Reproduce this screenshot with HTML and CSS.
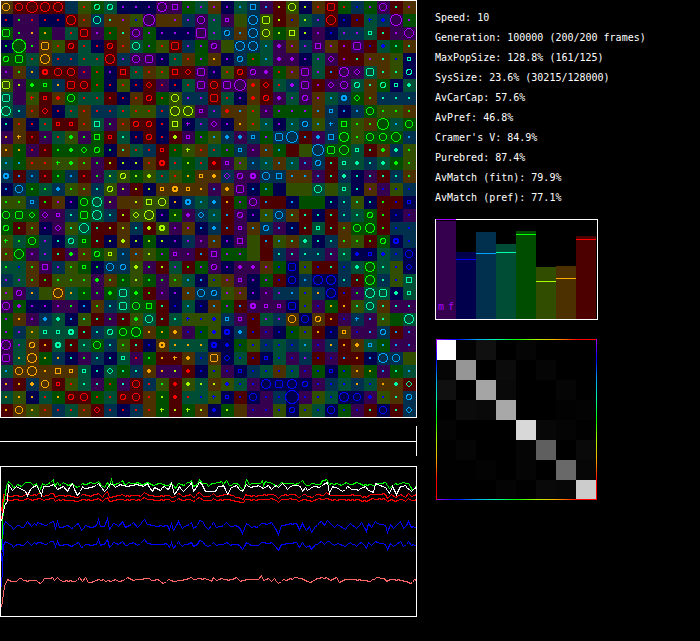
FILE: index.html
```html
<!DOCTYPE html>
<html lang="en">
<head>
<meta charset="utf-8">
<title>Population simulation</title>
<link rel="stylesheet" href="styles.css">
</head>
<body>
<main class="app">
  <section class="world">
    <svg id="field" class="field" viewBox="0 0 417 418" role="img"></svg>
    <svg class="timeline" viewBox="0 0 417 30" role="img"><path d="M0 15.5H416.5M416.5 0V30"/></svg>
    <svg id="history" class="history" viewBox="0 0 417 151" role="img"></svg>
  </section>
  <aside class="panel">
    <ul class="stats">
      <li>Speed: 10</li>
      <li>Generation: 100000 (200/200 frames)</li>
      <li>MaxPopSize: 128.8% (161/125)</li>
      <li>SysSize: 23.6% (30215/128000)</li>
      <li>AvCarCap: 57.6%</li>
      <li>AvPref: 46.8%</li>
      <li>Cramer's V: 84.9%</li>
      <li>Purebred: 87.4%</li>
      <li>AvMatch (fitn): 79.9%</li>
      <li>AvMatch (pref): 77.1%</li>
    </ul>
    <div id="bars" class="bars"></div>
    <div id="matrix" class="matrix"></div>
  </aside>
</main>
<script src="app.js"></script>
</body>
</html>
```
FILE: styles.css
```css
* {
  box-sizing: border-box;
}

body {
  margin: 0;
  background: #000;
  color: #fff;
  font: 10px/20px "DejaVu Sans Mono", "Liberation Mono", monospace;
}

.app {
  display: flex;
  align-items: flex-start;
  gap: 18px;
}

.world {
  flex: 0 1 417px;
  min-width: 0;
}

.world svg {
  display: block;
  width: 100%;
  shape-rendering: crispEdges;
}

.world .timeline {
  margin: 8px 0 10px;
  fill: none;
  stroke: #fff;
}

.frame {
  fill: none;
  stroke: #fff;
}

.line {
  fill: none;
  stroke-width: 1;
}

.panel {
  padding-top: 8px;
}

.stats {
  margin: 0 0 11px;
  padding: 0;
  list-style: none;
  white-space: nowrap;
}

.bars {
  display: flex;
  align-items: flex-end;
  width: 163px;
  height: 101px;
  border: 1px solid #fff;
}

.bar {
  position: relative;
  flex: 0 0 20px;
}

.mark {
  position: absolute;
  left: 0;
  width: 100%;
  height: 1px;
}

.sexes {
  display: flex;
  align-items: flex-end;
  gap: 4px;
  height: 100%;
  padding: 0 2px 2px;
  color: #aa00ff;
}

.matrix {
  position: relative;
  display: grid;
  grid-template-columns: repeat(8, 20px);
  grid-auto-rows: 20px;
  width: 161px;
  margin: 19px 0 0 1px;
  padding: 1px 0 0;
}

.matrix::before,
.matrix::after {
  content: "";
  position: absolute;
  inset: 0;
  --spectrum: #aa00ff, #0000ff, #00a2ff, #00ffaa, #00ff00, #aaff00, #ffaa00, #ff0000, #ff0000;
}

.matrix::before {
  background:
    linear-gradient(to right, var(--spectrum)) top / 100% 1px no-repeat,
    linear-gradient(to right, var(--spectrum)) bottom / 100% 1px no-repeat;
}

.matrix::after {
  background:
    linear-gradient(to bottom, var(--spectrum)) left / 1px 100% no-repeat,
    linear-gradient(to bottom, var(--spectrum)) right / 1px 100% no-repeat;
}
```
FILE: app.js
```js
const BRIGHT = { P: '#aa00ff', B: '#0000ff', S: '#00a2ff', T: '#00ffaa', G: '#00ff00', Y: '#aaff00', O: '#ffaa00', R: '#ff0000' };
const DARK = { P: '#35004d', B: '#00004d', S: '#00304d', T: '#004d35', G: '#004d00', Y: '#304d00', O: '#4d3000', R: '#4d0000' };

// Each cell: habitat colour, population colour, glyph.
const FIELD = `
OOc RRc RRO RRC RRC S-- YR. GTo TTo BP. BP. BP. PPC PPq GP. TP. OP. BP. TS. SSq PS. RY. YYc BY. OR. RRr GR. SB. GP. PPc RT. OP.
BR. PG. PR. BR. BR. RRC OR. STc OT. OP. YB. PPO O-- OP. SP. PPc TP. PPs Y-- SSC YYr RY. OB. TY. SP. RRD BB. RB. TB+ SB* PPO GP.
GGr PG. PO. GO. P-- TR. RRr PP. GR. OT. PPc GP. BP. BP. BP. PPW TP. SSo OS. SSC YYc GY. YYq BY. PP. BB. SP. SP. TTs RT. PP. PPD
BG. GGX PG. OOr YR. RRo TR. BR. RRo OR. TTc GP. YR. RRr SP. GP. PPo Y-- SSC SSC TS. PP* OP. SP. PPq OP. RP. PPr RB. TB* GT. OT.
GGo GGr TR. OOC SR. SR. TR. TR. RRC SP. PPc PPr BP. TR. OR. GP. OO. BP. SSo GR. TS. PP* PP* BP. TP. PPd RP. RT. OP. OT. YB. BTs
PP. OG. SO. RRb RRc RRc PR. GR. BP. RRq TR. OR. YR. RRq RRd PPr BP. YR. RRo PPo PP* GR. OP. PPr TP. RS. PPC PPd TTr OT. YT. BTo
YYr PY. GG* GGs SO. RRr RRe GR. BR. YR. BR. RRd PR. BR. TR. PPr RRc PPr PPO OR* RRd TR. SP* PPr RP. PPd PPc TTo OT. GTo BTs TT*
TTr P-- YR+ RRs OR* GGe TR. TR. RR. BR. OR. RRo GR. YYc SP. SP. RRr TR. BP. OR* RRo PP* TP. PPo OP. TS. SSb GGd OG. ST. ST. ST.
TTC ST. OR. RRd BR. TR. OR. SR. SR. TR. YR. YR. SR. YYC YYC PPs SP. OR* OS. YR. PP. GP. GP. GP. OS. SSs BS. SS. GGc YG. YG. OG.
BT. OR. BR. TR. RRs RRs OR. TTq PG. OR. RRo RRo BR. YYq BP+ SP. PPd BP. OO. YR. TS. BP. TS. SSo YS. SS+ GGq YG. OG. GGO TS. GGc
PO. OO+ RR. PG. TR. YG* PG. GGq RRs TT. BR. RRo BR. RY* PPs GP. YS. SS* PS* SSs GP. SSr SSO RS. PS* SSq GGC YG. GGc GGc GGD SS.
OO. GO. PR. RR. GG. GG* GGd GGo BG. OT. TR. SR. RRs GR. YY+ OR. TR. GP. SSs PP. OS. GS. R-- Y-- SSO GGr GGD TTs RT. OG* ST* YG.
TS. GS. OR. OR. YG+ YG* OG. PG. RY. BY. BY. OR. RRb TR. GY. TR. RR* PPs YP. SS. TS. OS. TS. PS. SSo RT. TTs TT* ST. TT* GG* YG.
SSb RS. SS. RR. GG. SS. RR. PG. TY. YYo GY. YY* TR. YR. GO. OOs OO* SPd PPo PPb SSe SSq OS. OS. PS. RT. ST* BT. PT. RT. ST. OG.
BS. SSc GG. TG. SS* YG. OG. ST. YYo PY. RY. BY. OOs OOb OOs OO. PS. OO* PPr BS. GS. B-- Y-- Y-- TTc Y-- TTs BT. OP. PB. YB. SB.
YG. YG. SSs RG. OP. BP. GGc TTC PY. O-- OY. YYq YYc BO. SSb TS. SS* RO. GP. PPc RS. R-- BS. G-- G-- BT. ST. YT. BT. RG. RB. BBs
GGc GGr GGd PPd PPs ST. GGr TTC ST. RY. YYd YYC BP. GY. PP* SSd TS. RS. PPo BP. YS. SSc OT. RT. BT. RT. ST. TT. GGo RG. BB. PB.
GGo RG. OG. BP. PPd YT. TTD RT. RY. OY. ST. RY* YYb PP. OP. BS. SS* RS. PPs OS. SSo PS. BS. RT. TTs RT. OG. GGc GGC RG. SB. SB.
YG+ TG. GGe SP. BT. TTo GGs RT. BY. OY* BY. GY. BY. BP. SP. PP. OS. BP. PPq Y-- RS. YS. OT. TT* BT. ST. OG. YG. RG. GGo BBb SB.
OG. GGD PP. SP. RT. PG* OG. GGo YYs SS. OS. YY. GP. PPs PP. RS. PPq GP. GP. Y-- R-- ST. PT. ST. ST. PT. TT. BB* BBs TB* SB. BBe
TG. TB. OG. PPq SP. YG. GGs BG. SSc SSo YY* PG. RY. TP. RG. GP. PPo BP. PP* PP* OP. GB. BBr YB. RB. RT. SB. TT* GGC TT. YB. BBd
SP. TP. OG. RG. YG. YG. YG. PG* OG. GG. YY. GG. PG. YG. TS. BS. YB. OP. PPs BP. GP. RB. BBc SS. BBC BBC ST. RT. GGC ST. YB. TTq
YP. PPo SO. Y-- OOC TO. GG. PG. GG* TTr GG* RG. PP. BP. OS. SSc SSo YP. OP. BP. PP. SP. SS. YB. SO. BBC RB. PG. TTC TTr BT* TTs
PPc GP* BP. BP. PP. PG. BS. OG. ST. TTr GGc GGq RT. BB. TS. BB. OS. GP. RS. PPb PPs PPs BBr YB. PB. GO. RO. YT. TTc OT. PT. PT.
GP. OO. PP. SS* TT* BS. YT. RT. PG. RT. YG* TTc RT. TT. YB+ YB. YB* SSs PPs RB. TP. SP. OOc BBc OOo RO. PB. SS+ PS. YT. G-- TTC
GP. SP. YO. TTs TTs TTb RT. ST. TTo GGc GGC OO. GO. OO* PB. GB. YB* BBb SS* RB. PB. BB. GB. YB. RO. BB. OOs PB. PS. SSo RS. PS.
PPC TP. OOo RO. TTb RT. TT. GGc ST. YG. RT. BB. OOb TO. TO. TO. BBb BB* GB. YB. SB. TB. SB. TS. PB. SO. RO. OO* TSs GS. PS. PS.
PPr TO. OOC GO. SO. BT. PG. ST. BT. TTs PR. GG. RO. RO+ OO* SB. OOr BBd TB. RB. BBs TB. PB. SP. RB. PB. RS. RO. BS. SSC SSc Y--
TS. OOc OOC OO. OOq OOs TTs BT. TTd GT. ST. OO* PO. PY. RR* BB. YB. PB. BBs SB. TB. OB. TB. PB. GB. BBs GB. OO. GO. PS. GT. TS.
PO. RO. SO* OOc RRs YR. TT. PT. GR. PT. RRc SR. YG. RR* YY* TY. OY. YB* TB. PB. BBC BBr BBC BBo PB. SB. TB. SO. TB. OO. OT* RTd
TO. YO. BO. TR. GO. RRo RRc GR. TR. RRo RRc OR. GY. RR* TR. TB. YB+ BBs RB. BBc PB. SB. BBX PB. YB. TB. BBC BBc PB* YB. OT. SSo
RO. OOc YO. OR. SR. TR. OR. RRd SR. BR. SR. OR. GY+ RY. GY+ OY. BB* GY. O-- PB. PB. YB. BBo YB. TB. BBc GB. PB. RT. BBc RT. SSd`;

const CELL = 13;
const RADIUS = { o: 2.5, b: 2, c: 3.5, C: 4.5, O: 5.5, X: 6.5 };
const SQUARE = { s: 4, q: 6, r: 8, W: 10 };
const DIAMOND = { d: 3, e: 4, D: 5 };

function glyph(kind, x, y, color) {
  const outline = `fill="none" stroke="${color}"`;
  if (kind === '.') return `<rect x="${x - 1}" y="${y - 1}" width="2" height="2" fill="${color}"/>`;
  if (kind === '+') return `<path d="M${x - 2} ${y - 0.5}h4M${x - 0.5} ${y - 2}v4" ${outline}/>`;
  if (kind === '*') return `<path d="M${x - 1} ${y - 2}h2v1h1v2h-1v1h-2v-1h-1v-2h1z" fill="${color}"/>`;
  if (kind in RADIUS) {
    const width = kind === 'b' ? 2 : 1;
    return `<circle cx="${x}" cy="${y}" r="${RADIUS[kind]}" stroke-width="${width}" ${outline}/>`;
  }
  if (kind in SQUARE) {
    const size = SQUARE[kind];
    const round = size > 6 ? 2 : 0;
    return `<rect x="${x - size / 2 + 0.5}" y="${y - size / 2 + 0.5}" width="${size - 1}" height="${size - 1}" rx="${round}" ${outline}/>`;
  }
  if (kind in DIAMOND) {
    const r = DIAMOND[kind] - 0.5;
    const flat = kind === 'd' ? 0.5 : 1.5;
    return `<path d="M${x - flat} ${y - r}h${flat * 2}L${x + r} ${y - flat}v${flat * 2}L${x + flat} ${y + r}h${-flat * 2}L${x - r} ${y + flat}v${-flat * 2}z" ${outline}/>`;
  }
  return '';
}

let ground = '';
let glyphs = '';
FIELD.trim().split('\n').forEach((row, r) => {
  row.split(' ').forEach((cell, c) => {
    const x = c * CELL;
    const y = 1 + r * CELL;
    ground += `<rect x="${x}" y="${y}" width="${CELL}" height="${CELL}" fill="${DARK[cell[0]]}"/>`;
    glyphs += glyph(cell[2], x + 6, y + 6, BRIGHT[cell[1]]);
  });
});
document.getElementById('field').innerHTML =
  ground + glyphs + '<rect class="frame" x="0.5" y="0.5" width="416" height="417"/>';

// History samples as "x,y" pairs in thirds of a pixel, in two halves of the run.
const HALF = 624;
const HISTORY = {
  salmon: ['4,578 12,515 20,492 32,500 48,500 56,490 75,497 100,495 120,505 133,490 150,490 155,488 163,495 170,487 185,498 210,497 222,500 238,488 246,500 256,487 263,503 280,500 295,492 330,500 345,494 360,500 382,488 400,495 420,492 440,490 460,497 470,492 490,506 505,492 520,500 545,495 572,488 585,494 600,490 620,493',
    '0,493 10,500 15,487 25,495 40,490 60,495 85,488 95,500 115,492 150,494 160,481 165,495 180,490 188,498 197,490 210,505 225,493 240,494 265,487 285,492 305,503 320,492 340,488 355,487 365,495 385,487 392,502 410,493 440,493 465,495 480,500 505,488 530,492 535,500 545,492 575,495 600,503 612,503 618,492 625,495'],
  blue: ['4,440 8,335 14,320 25,328 38,343 50,330 70,337 82,318 92,335 102,325 108,330 112,323 135,330 158,318 164,340 170,320 178,338 200,332 212,340 235,325 243,345 255,332 270,338 288,332 295,312 300,335 312,333 320,310 327,343 340,325 355,333 365,320 375,338 400,323 410,337 420,328 433,312 442,328 460,330 475,333 500,330 508,343 513,325 520,347 533,318 545,340 560,330 572,322 580,340 590,332 597,316 605,320 615,335',
    '0,342 15,322 25,337 45,330 53,323 65,335 80,330 92,338 103,355 115,325 130,337 150,335 160,325 175,328 190,322 200,340 210,358 220,332 240,328 265,325 272,343 282,325 295,345 302,335 310,352 320,333 340,320 348,330 356,317 370,328 378,337 388,328 410,342 425,325 445,340 460,322 473,350 480,325 490,337 500,320 515,328 530,332 537,352 545,328 555,340 565,330 575,320 585,340 600,320 608,337 615,333 625,340'],
  red: ['4,290 10,237 20,240 35,245 50,240 65,244 82,235 95,242 120,235 130,243 158,235 165,246 175,240 200,242 232,246 245,238 270,243 295,235 305,246 320,230 327,248 345,243 365,237 375,243 400,240 420,243 433,232 447,240 470,244 500,240 520,247 533,235 545,245 570,237 580,247 598,232 608,243 620,243',
    '0,245 15,236 25,243 55,239 75,242 104,252 112,238 130,243 155,240 180,238 195,238 210,250 218,240 258,237 270,246 285,238 310,246 325,237 345,240 355,233 365,241 400,241 420,240 450,241 475,248 485,238 500,238 530,237 538,249 550,238 560,247 575,237 590,246 600,235 610,243 625,238'],
  white: ['4,320 10,285 15,265 20,262 25,207 35,225 48,215 65,222 82,240 90,222 108,210 112,213 123,240 130,213 145,214 158,207 172,222 190,215 200,228 215,205 222,222 232,242 245,215 260,220 280,213 295,206 312,228 325,213 330,205 345,216 360,208 385,213 410,209 430,213 440,206 455,228 462,218 480,225 493,213 505,222 512,206 522,238 538,213 550,230 560,218 572,203 580,228 597,203 604,206 615,228',
    '0,230 20,228 30,213 45,210 57,237 68,218 85,212 102,230 113,207 128,217 150,210 165,220 180,212 190,222 203,210 210,218 222,205 238,222 255,210 275,213 282,228 290,216 298,226 315,213 330,218 345,208 357,203 362,235 372,213 385,218 402,230 418,213 430,222 450,225 472,213 480,226 495,232 500,206 515,212 530,216 543,235 552,213 563,237 575,215 590,212 608,230 618,220 625,218'],
  green: ['4,405 8,270 17,215 25,200 38,218 50,208 62,213 75,202 90,203 98,210 108,205 118,230 125,205 135,212 158,194 162,213 170,203 178,212 190,203 205,212 215,205 232,218 245,205 258,208 270,203 285,205 295,200 312,218 320,203 327,215 333,194 340,210 352,205 365,197 372,208 385,203 400,206 412,203 430,208 440,202 460,210 480,205 495,212 510,205 525,220 535,205 548,212 572,196 580,213 590,208 597,194 606,205 618,206',
    '0,213 12,206 40,200 46,208 53,197 62,212 75,205 90,208 104,225 115,194 123,207 140,204 155,205 161,196 166,210 172,198 185,203 195,208 208,214 220,203 245,206 268,206 282,197 295,212 310,206 335,208 341,197 355,194 362,208 385,205 400,210 415,203 432,208 445,203 465,210 490,208 498,213 500,204 520,206 530,202 542,220 560,205 575,206 585,201 600,204 612,225 625,210']
};

function samples(name) {
  return HISTORY[name].flatMap((half, i) =>
    half.split(' ').map(pair => {
      const [x, y] = pair.split(',').map(Number);
      return [x + i * HALF, y];
    }));
}

// A line through the samples, with a slight ripple on the long steps.
function line(points, color) {
  const out = [];
  points.forEach(([x, y], i) => {
    out.push([x, y]);
    const next = points[i + 1];
    if (!next) return;
    const steps = Math.floor((next[0] - x) / 6);
    for (let k = 1; k < steps; k++) {
      const t = k / steps;
      const ripple = (k + i) % 2 ? 1 : -1;
      out.push([x + (next[0] - x) * t, y + (next[1] - y) * t + ripple]);
    }
  });
  const path = out.map(([x, y]) => `${Math.round(x / 3) + 0.5},${Math.round((y - 154) / 3) + 0.5}`).join(' ');
  return `<polyline class="line" stroke="${color}" points="${path}"/>`;
}

function echo(name, from, to, start) {
  return samples(name).map(([x, y], i) => [x, i === 0 ? start : to + (y - from) * 0.7]);
}

document.getElementById('history').innerHTML =
  line(samples('salmon'), '#ff6666') +
  line(echo('blue', 332, 388, 518), '#0000ff') +
  line(samples('blue'), '#0000ff') +
  line(echo('red', 242, 255, 320), '#ff0000') +
  line(samples('red'), '#ff0000') +
  line(samples('green'), '#00ff00') +
  line(samples('white'), '#ffffff') +
  '<rect class="frame" x="0.5" y="0.5" width="416" height="150"/>';

// Bars: colour, height, height of the mark above the base.
const BARS = [['P', 98, 99], ['B', 67, 59], ['S', 87, 65], ['T', 75, 66], ['G', 88, 84], ['Y', 52, 37], ['O', 53, 40], ['R', 83, 79]];
document.getElementById('bars').innerHTML = BARS.map(([c, height, mark], i) =>
  `<div class="bar" style="height:${height}px;background:${DARK[c]}">` +
  (i === 0 ? '<div class="sexes"><span>m</span><span>f</span></div>' : '') +
  `<span class="mark" style="bottom:${mark}px;background:${BRIGHT[c]}"></span></div>`).join('');

const MATRIX = [
  [255, 3, 16, 0, 5, 0, 0, 0],
  [5, 150, 0, 11, 0, 5, 0, 0],
  [16, 0, 165, 9, 0, 0, 5, 0],
  [0, 11, 9, 168, 0, 0, 2, 3],
  [4, 0, 0, 0, 216, 7, 4, 1],
  [1, 5, 0, 0, 5, 95, 0, 9],
  [1, 1, 3, 0, 5, 0, 105, 6],
  [0, 0, 0, 4, 1, 9, 7, 204]
];
document.getElementById('matrix').innerHTML = MATRIX.flat()
  .map(v => `<span style="background:rgb(${v},${v},${v})"></span>`).join('');
```
